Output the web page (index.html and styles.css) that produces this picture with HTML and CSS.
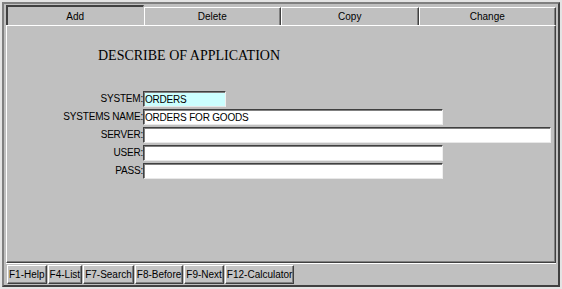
FILE: index.html
```html
<!DOCTYPE html>
<html lang="en">

<head>
    <meta charset="UTF-8">
    <meta name="viewport" content="width=device-width, initial-scale=1.0">
    <title>Describe of Application</title>
    <link rel="stylesheet" href="styles.css">
</head>

<body>
    <div class="window">
        <div class="tabs">
            <div class="tab active">Add</div>
            <div class="tab">Delete</div>
            <div class="tab">Copy</div>
            <div class="tab">Change</div>
        </div>

        <div class="panel">
            <h1 class="title">DESCRIBE OF APPLICATION</h1>
            <form class="app-form">
                <label for="system">SYSTEM:</label>
                <input type="text" id="system" class="field short focused" value="ORDERS">
                <label for="sysname">SYSTEMS NAME:</label>
                <input type="text" id="sysname" class="field" value="ORDERS FOR GOODS">
                <label for="server">SERVER:</label>
                <input type="text" id="server" class="field wide" value="">
                <label for="user">USER:</label>
                <input type="text" id="user" class="field" value="">
                <label for="pass">PASS:</label>
                <input type="text" id="pass" class="field" value="">
            </form>
        </div>

        <div class="keybar">
            <button class="key">F1-Help</button>
            <button class="key">F4-List</button>
            <button class="key">F7-Search</button>
            <button class="key">F8-Before</button>
            <button class="key">F9-Next</button>
            <button class="key">F12-Calculator</button>
        </div>
    </div>
</body>

</html>
```

FILE: styles.css
```css
* {
    box-sizing: border-box;
}

body {
    margin: 0;
    background-color: #e4e4e4;
    font-family: "Liberation Sans", Arial, sans-serif;
    font-size: 10px;
    color: #000;
}

.window {
    margin: 2px;
    width: 558px;
    height: 285px;
    border: 2px solid #808080;
    border-right-color: #404040;
    border-bottom-color: #404040;
    background-color: #c0c0c0;
    padding: 1px 0 0 2px;
    display: flex;
    flex-direction: column;
}

/* tabs */
.tabs {
    display: grid;
    grid-template-columns: repeat(4, 1fr);
    height: 20px;
    width: 550px;
}

.tab {
    display: flex;
    align-items: center;
    justify-content: center;
    margin-top: 2px;
    border-top: 1px solid #fff;
    border-left: 1px solid #fff;
    border-right: 1px solid #404040;
    box-shadow: inset -1px 0 #808080;
    background-color: #c0c0c0;
}

.tab.active {
    margin-top: 0;
    border-top: 2px solid #404040;
    border-left: 2px solid #404040;
    border-right: 1px solid #c0c0c0;
    box-shadow: none;
}

/* main panel */
.panel {
    width: 550px;
    height: 238px;
    border-top: 1px solid #fff;
    border-left: 1px solid #fff;
    border-right: 1px solid #404040;
    border-bottom: 1px solid #404040;
    box-shadow: inset -1px -1px #808080;
    padding-top: 21px;
}

.title {
    margin: 0 0 26px 91px;
    font-family: "Liberation Serif", "Times New Roman", serif;
    font-size: 14px;
    font-weight: normal;
    line-height: 18px;
}

.app-form {
    display: grid;
    grid-template-columns: 136px auto;
    row-gap: 2px;
    justify-items: start;
}

.app-form label {
    justify-self: end;
    line-height: 16px;
    letter-spacing: -0.2px;
}

.field {
    width: 300px;
    height: 16px;
    margin: 0;
    padding: 0 0 0 1px;
    border: 1px solid;
    border-color: #404040 #f0f0f0 #e8e8e8 #404040;
    box-shadow: inset 1px 1px #808080;
    background-color: #fff;
    font-family: "Liberation Sans", Arial, sans-serif;
    font-size: 10px;
    letter-spacing: -0.2px;
    color: #000;
    outline: none;
}

.field.short {
    width: 83px;
}

.field.wide {
    width: 408px;
}

.field.focused {
    background-color: #ccffff;
}

/* function key bar */
.keybar {
    width: 550px;
    height: 22px;
    border-top: 1px solid #fff;
    display: flex;
    align-items: center;
    gap: 1px;
    padding-left: 1px;
}

.key {
    height: 19px;
    margin: 0;
    padding: 0 1px;
    border: 1px solid;
    border-color: #fff #404040 #404040 #fff;
    box-shadow: inset -1px -1px #808080;
    background-color: #c4c4c4;
    font-family: "Liberation Sans", Arial, sans-serif;
    font-size: 10px;
    color: #000;
}
```
